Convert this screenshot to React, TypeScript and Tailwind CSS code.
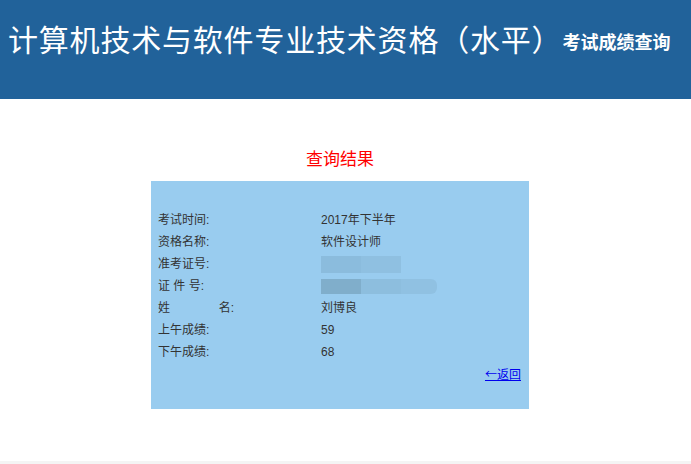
import React from 'react';

const rows: { label: React.ReactNode; value: React.ReactNode }[] = [
  { label: '考试时间:', value: '2017年下半年' },
  { label: '资格名称:', value: '软件设计师' },
  {
    label: '准考证号:',
    value: (
      <span className="flex h-[17px] w-[80px]">
        <span className="h-full w-[40px] bg-[#8bbcdd]" />
        <span className="h-full w-[40px] bg-[#8fc0e1]" />
      </span>
    ),
  },
  {
    label: '证 件 号:',
    value: (
      <span className="flex h-[15px] w-[116px]">
        <span className="h-full w-[40px] bg-[#80aecb]" />
        <span className="h-full w-[40px] bg-[#8dbede]" />
        <span className="h-full w-[36px] rounded-r-md bg-[#90c1e2]" />
      </span>
    ),
  },
  {
    label: (
      <span className="flex w-[76px] justify-between">
        <span>姓</span>
        <span>名:</span>
      </span>
    ),
    value: '刘博良',
  },
  { label: '上午成绩:', value: '59' },
  { label: '下午成绩:', value: '68' },
];

const App = (): React.ReactElement => (
  <div className="min-h-[464px] w-full bg-white font-['Liberation_Sans','Noto_Sans_CJK_SC',sans-serif]">
    <header className="flex h-[99px] items-start bg-[#21629a] px-2 pt-[22px] text-white">
      <h1 className="text-[30px] leading-[38px] tracking-[0.8px]">计算机技术与软件专业技术资格（水平）</h1>
      <span className="mt-[10px] text-[18px] font-bold leading-[22px]">考试成绩查询</span>
    </header>
    <main className="flex flex-col items-center pb-[52px] pr-[11px]">
      <h2 className="mt-[49px] h-[33px] text-[17px] leading-[24px] text-[#ff0000]">查询结果</h2>
      <div className="h-[228px] w-[378px] bg-[#99ccef] pt-[28px] text-[12px] text-[#333]">
        {rows.map((row, i) => (
          <div key={i} className="flex h-[22px] items-center pl-[7px]">
            <div className="w-[163px]">{row.label}</div>
            <div>{row.value}</div>
          </div>
        ))}
        <div className="mt-[2px] flex justify-end pr-[8px]">
          <a href="#" className="text-[12px] text-[#0000ee] underline">
            <span className="font-['Noto_Sans_CJK_SC',sans-serif]">←</span>返回
          </a>
        </div>
      </div>
    </main>
    <div className="h-[4px] bg-[#f4f4f4]" />
  </div>
);

export default App;
